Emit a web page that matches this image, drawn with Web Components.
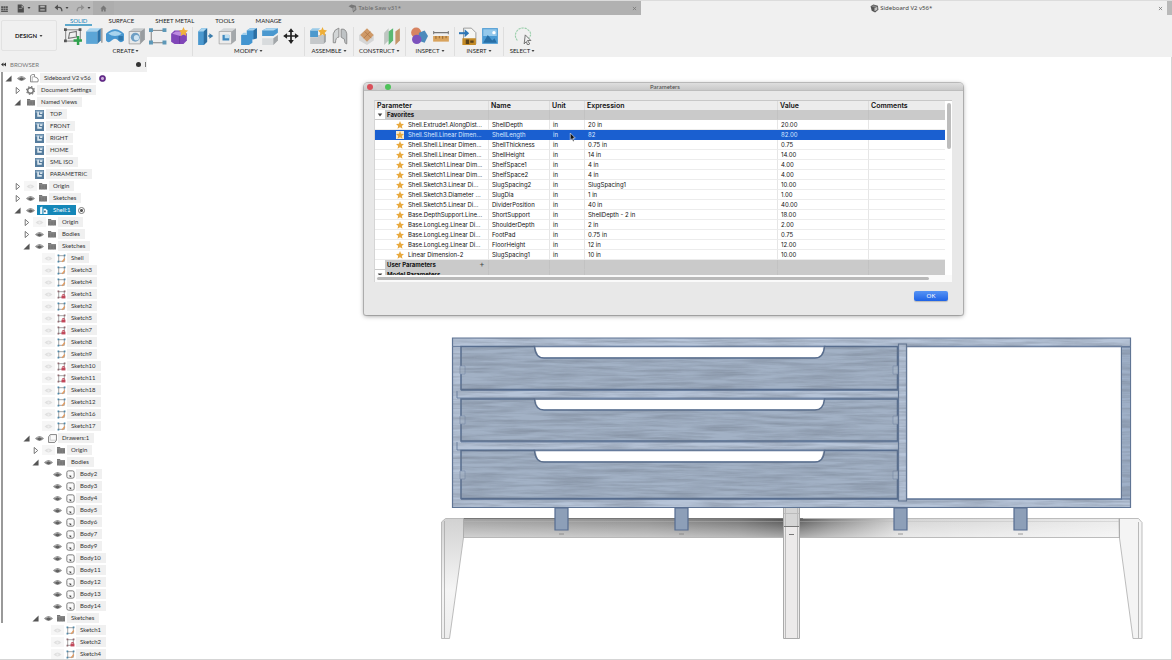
<!DOCTYPE html>
<html lang="en">
<head>
<meta charset="utf-8">
<title>Sideboard V2 v56</title>
<style>
html, body { margin: 0; height: 100%; }
body { font: 6px/8px Lato, "Noto Sans", sans-serif; color: #333; background: #fff; overflow: hidden; }
</style>
</head>
<body>
<cad-app></cad-app>
<script>
const ICONS = {
  grid: '<path fill="#555" d="M2 4h3.500v3h-3.500zM6.200 4h3.500v3h-3.500zM10.400 4h3.500v3h-3.500zM2 8h3.500v3h-3.500zM6.200 8h3.500v3h-3.500zM10.400 8h3.500v3h-3.500zM2 12h12v2h-12z"/>',
  file: '<path fill="#4d4d4d" d="M3 1h7l4 4v10H3z"/><path fill="#b9b9b9" d="M10 2v4h4zM5 8h6v1H5z"/>',
  save: '<path fill="#555" d="M1 2h14v12H1z"/><path fill="#b5b5b5" d="M4 3h8v3H4zM4 9h8v1H4zM4 11h8v1H4z"/>',
  undo: '<path fill="none" stroke="#505050" stroke-width="2.400" d="M4 6h5q5 0 5 7"/><path fill="#505050" d="M1 6l6-5v10z"/>',
  redo: '<path fill="none" stroke="#909090" stroke-width="2.400" d="M12 6H7q-5 0-5 7"/><path fill="#909090" d="M15 6L9 1v10z"/>',
  home: '<path fill="#777" d="M8 1L1 8h2v7h4v-4h2v4h4V8h2z"/>',
  cube: '<path fill="#555" d="M1 4l5-3 8 2 1 7-6 5-6-3z"/><path fill="#c4c4c4" d="M8 7l5-2v5l-5 3z"/><path fill="#888" d="M2 4l4-2 7 2-5 2z"/>',
  cubeDim: '<path fill="#777" d="M1 4l5-3 8 2 1 7-6 5-1-7z"/><path fill="#999" d="M8 7l5-2v5l-5 3z"/>',
  caret: '<path fill="#444" d="M2 4h12l-6 8z"/>',
  close: '<path stroke="#777" stroke-width="2.500" d="M3 3l10 10M13 3L3 13"/>',
  eye: '<path fill="#8a8a8a" d="M0 8q8-8 16 0q-8 8-16 0z"/><circle cx="8" cy="8" r="3.500" fill="#606060"/><path stroke="#ddd" d="M3 7q5-3 10 0" fill="none"/>',
  eyeOff: '<path fill="#e0e0e0" d="M1 8q7-7 14 0q-7 7-14 0z"/><circle cx="8" cy="8" r="2" fill="#efefef"/>',
  folder: '<path fill="#777" d="M0 2h6l1 2h9v11H0z"/><path stroke="#a4a4a4" d="M0 5.500h16"/><path stroke="#8e8e8e" d="M5.500 6v9M10.500 6v9"/>',
  gear: '<circle cx="8" cy="8" r="5" fill="none" stroke="#777" stroke-width="2.500"/><circle cx="8" cy="8" r="7" fill="none" stroke="#777" stroke-width="2" stroke-dasharray="2.700 2.800"/>',
  view: '<path fill="#557c9d" d="M0 0h16v16H0z"/><path fill="#88a7c0" d="M1 1h14v4H1z"/><path fill="#dce8f0" d="M4 3h3v6h5v3H4zM9 4h4v3H9z"/>',
  doc: '<path fill="#fff" stroke="#666" stroke-width="1.300" d="M1 14V3l3-2h4v4l5 2q3 3 1 7z"/><path stroke="#888" fill="none" d="M8 5H4v9"/>',
  comp: '<path fill="#eef6fa" d="M2 2l4-1v13H2z"/><path fill="#fff" d="M8 5h4l3 3v6H8z"/><path fill="#37627c" d="M9 8h3v3H9z"/>',
  sketch: '<path fill="#fff" stroke="#777" stroke-width="1.200" d="M3 3h10v10H3z"/><path fill="#4d87a8" d="M1 1h3v3H1zM12 1h3v3h-3zM1 12h3v3H1z"/><path stroke="#e39a5d" stroke-width="2.200" d="M9 14l5-6"/>',
  sketchLock: '<path fill="#fff" stroke="#777" stroke-width="1.200" d="M3 3h10v10H3z"/><path fill="#8f6a70" d="M1 1h3v3H1zM12 1h3v3h-3zM1 12h3v3H1z"/><path fill="#c2485a" d="M8 10h7v5H8z"/><path stroke="#c2485a" stroke-width="1.500" fill="none" d="M10 10V8h3v2"/>',
  body: '<rect x="1.500" y="1.500" width="13" height="13" rx="3" fill="#fafafa" stroke="#666" stroke-width="1.500"/><path stroke="#999" d="M5 10h4v3"/>',
  part: '<path fill="#fafafa" stroke="#666" stroke-width="1.400" d="M1 5l3-4h11v10l-3 4H1z"/><path stroke="#aaa" fill="none" d="M4 1v10h11"/>',
  shut: '<path fill="none" stroke="#666" stroke-width="2" d="M5 1v14l8-7z"/>',
  open: '<path fill="#555" d="M15 1v14H1z"/>',
  star: '<path fill="#e8a93f" d="M8 0l2.300 5.300 5.700.6-4.300 3.900 1.300 5.800-5-3-5 3 1.300-5.800L0 5.900l5.700-.6z"/>',
  newSketch: '<path fill="none" stroke="#777" stroke-width=".8" d="M1.500 2.500h13v10h-13z"/><path fill="none" stroke="#777" d="M4 10l1-5 6-1v5z"/><path fill="#555" d="M0 1h2.500v2.500H0zM13 1h2.500v2.500H13zM0 11h2.500v2.500H0z"/><path stroke="#2fa34d" stroke-width="2.200" d="M12.500 8v8M8.500 12h8"/>',
  extrude: '<path fill="#a7d4ef" d="M1 4l3-3h10l-3 3z"/><path fill="#5ba5d6" d="M1 4h10v11H1z"/><path fill="#2c73a8" d="M11 4l3-3v11l-3 3z"/><path stroke="#666" stroke-width=".8" d="M15 1v13"/>',
  revolve: '<path fill="#4897d0" d="M0 6q8-8 16 0v6q-3 3-5 0-3-3-6 0-3 3-5 0z"/><path fill="#a8d4ee" d="M2 6q6-5 12 0-6 4-12 0z"/><path fill="#2f76aa" d="M11 8h4v4h-4z"/>',
  hole: '<path fill="#c9ccce" d="M1 4l4-3h10l-4 3z"/><path fill="#e7e9ea" stroke="#999" stroke-width=".7" d="M1 4h10v11H1z"/><path fill="#999da0" d="M11 4l4-3v10l-4 4z"/><circle cx="6.500" cy="9" r="4" fill="#6f9fc4"/><circle cx="7.500" cy="9.500" r="2.300" fill="#cfe4f2"/>',
  pattern: '<path stroke="#777" stroke-width=".8" fill="none" d="M2 3h11M2 3v11h11"/><path fill="#5d98b8" d="M0 1h3.500v3.500H0zM12 1h3.500v3.500h-3.500zM0 12h3.500v3.500H0zM12 12h3.500v3.500h-3.500z"/>',
  form: '<path fill="#8046b8" d="M1 6l3-3h8l3 3v6l-3 3H4l-3-2z"/><path fill="#bd8ae0" d="M2 6l3-2h6l3 2-5 2z"/><path stroke="#5e2d91" stroke-width=".5" fill="none" d="M8.500 8v7"/><path fill="#f0b13c" d="M12 0l1.200 2.600L16 3l-2 2 .5 3L12 6.500 9.500 8l.5-3-2-2 2.800-.4z"/>',
  press: '<path fill="#4a98cf" d="M1 4l3-3h5v12l-3 3H1z"/><path fill="#a7d4ef" d="M1 4l3-3h5L6 4z"/><path fill="#2b6d9f" d="M6 4l3-3v12l-3 3z"/><path stroke="#3b7cab" stroke-width="1.500" d="M10 8h3"/><path fill="#3b7cab" d="M11 5.500l3.500 2.500-3.500 2.500z"/>',
  fillet: '<path fill="#d5d8da" d="M1 4l4-3h11l-4 3z"/><path fill="#ececec" stroke="#999" stroke-width=".6" d="M1 4h11v11H1z"/><path fill="#a4a8ab" d="M12 4l4-3v11l-4 3z"/><path fill="#3f89bf" d="M4 7h6v5H4z"/><path fill="#bddff2" d="M6 7h4v3H6z"/>',
  combine: '<path fill="#4294d0" d="M1 7h5V3l3-2h6v9l-4 1v3l-3 2H1z"/><path fill="#a2d0ec" d="M6 3l3-2h6l-3 2zM1 7l2-2h3v2z"/><path fill="#2c6fa3" d="M12 3l3-2v9l-3 1z"/>',
  split: '<path fill="#4a98cf" d="M1 3l4-2h10v4l-4 3H1z"/><path fill="#b0d8f0" d="M1 3l4-2h10l-4 2z"/><path fill="#d8dbdd" d="M1 10h10l4-3v5l-4 4H1z"/><path fill="#a2a6a9" d="M11 10l4-3v5l-4 4z"/>',
  move: '<path stroke="#222" stroke-width="1.500" d="M8 3v10M3 8h10"/><path fill="#222" d="M8 1l2.500 3.500h-5zM8 15l2.500-3.500h-5zM1 8l3.500-2.500v5zM15 8l-3.500-2.500v5z"/>',
  newComp: '<path fill="#4c99cd" d="M1 3h7v6H1z"/><path fill="#c5c8ca" d="M1 9h7v6H1zM8 7h5v8H8z"/><path fill="#9bcbe8" d="M1 3l2-2h7L8 3z"/><path fill="#a0a4a6" d="M13 7l2-1v7l-2 2z"/><path fill="#eeae38" d="M12 0l1 2.500 3 .5-2 2 .5 3L12 6.500 9.500 8l.5-3-2-2 3-.5z"/>',
  joint: '<path fill="#d2d5d6" stroke="#888" stroke-width=".8" d="M2 14V6q1-4 5-5v8q-3 0-3 5z"/><path fill="#bfc3c5" stroke="#888" stroke-width=".8" d="M9 2q4-1 5 4v9q-2 0-2-4l-3-2z"/>',
  plane: '<path fill="#d5d6d6" d="M1 7l7-5 6 5v5l-6 4-7-4z"/><path fill="#cf9a68" d="M2 7l6-6 6 6-6 6z"/><path stroke="#a96e3b" stroke-width=".6" fill="none" d="M6 4l6 6M11 4L5 10"/>',
  mid: '<path fill="#bfc6c2" d="M1 5l4-4v11l-4 4z"/><path fill="#5bb872" d="M5 4l4-3v11l-4 4z"/><path fill="#c4956a" d="M11 4l4-3v11l-4 4z"/>',
  inspect: '<circle cx="5.500" cy="5" r="4.500" fill="#d78361"/><path fill="#4c8abb" d="M8 5l5-2 3 5-3 6-6-2z"/><circle cx="6" cy="11" r="4.200" fill="#7c52bd"/>',
  measure: '<path fill="#d9a35c" d="M1 8h14v5H1z"/><path stroke="#8b5f2b" stroke-width=".8" d="M3.500 8v2.500M6.500 8v2M9.500 8v2.500M12.500 8v2"/><path stroke="#777" stroke-width=".9" d="M1 5h14M1.500 3.500v3M14.500 3.500v3"/>',
  insert: '<path fill="#f6f6f3" stroke="#888" stroke-width=".7" d="M4 1h7l4 4v10H4z"/><path fill="#c38a25" d="M3 10h12v6H3z"/><path fill="#5a431c" d="M6 11h3v4H6zM10 12h3v2h-3z"/><path stroke="#2e76b5" stroke-width="1.800" d="M0 5.500h6"/><path fill="#2e76b5" d="M5 2l4 3.500L5 9z"/>',
  image: '<path fill="#4b9bd4" d="M1 1h14v14H1z"/><path fill="#94c9ec" d="M2 2h12v6H2z"/><circle cx="11.500" cy="5" r="1.500" fill="#fff"/><path fill="#286fa6" d="M2 14l4-7 4 5 2-2 2 4z"/>',
  select: '<path fill="none" stroke="#99ceaa" stroke-width="1" stroke-dasharray="2 .8" d="M3 12Q-1 7 4 2q6-3 10 2 2 3-1 6"/><path fill="#eee" stroke="#666" stroke-width=".8" d="M10 7l5 5h-3l2 3-2 1-1-3-2 2z"/>',
  pointer: '<path fill="#111" stroke="#fff" stroke-width="1" d="M4 0l9 9H9l2 5-2 1-2-5-3 3z"/>'
};

/* Shared base: fills an open shadow root from the class's css() and html(). */
class Piece extends HTMLElement {
  connectedCallback() {
    if (this.shadowRoot) return;
    const t = document.createElement('template');
    t.innerHTML = `<style>*{box-sizing:border-box}button{font:inherit;color:inherit;border:0;padding:0;margin:0;background:none}a{color:inherit;text-decoration:none}${this.css()}</style>${this.html()}`;
    this.attachShadow({ mode: 'open' }).append(t.content.cloneNode(true));
  }
  attr(n, d = '') { return this.getAttribute(n) ?? d; }
}

class CadIcon extends Piece {
  css() { return ':host{display:inline-block;width:9px;height:9px;flex:none}svg{display:block;width:100%;height:100%}'; }
  html() { return `<svg viewBox="0 0 16 16" aria-hidden="true">${ICONS[this.attr('name')]}</svg>`; }
}
customElements.define('cad-icon', CadIcon);

class DocTab extends Piece {
  css() { return `
    :host{display:flex;flex:1;align-items:center;background:#b1b1b1;color:#666;padding:0 4px;min-width:0;font-family:"Noto Sans",sans-serif}
    :host([active]){background:#f0f0f0;color:#444}
    a{flex:1;display:flex;justify-content:center;align-items:center;gap:1px;white-space:nowrap}
    button{display:flex} .x{width:5px;height:5px}`; }
  html() { return `<a href="#"><cad-icon name="${this.attr('icon')}"></cad-icon><slot></slot></a><button aria-label="Close tab"><cad-icon class="x" name="close"></cad-icon></button>`; }
}
customElements.define('doc-tab', DocTab);

class TabBar extends Piece {
  css() { return `
    :host{display:flex;height:15px;border-top:1px solid #dcdcdc;background:#b9b9b9}
    .quick{display:flex;align-items:center;width:93px;flex:none;gap:7px}
    .quick button{display:flex;align-items:center;gap:2px}
    .quick .c{width:4px;height:4px}
    .home{width:21px;background:#adadad;display:flex;align-items:center;justify-content:center}
    .home cad-icon{width:7px;height:7px}
    .end{width:5px;background:#b9b9b9}`; }
  html() {
    const b = (n, l, c) => `<button aria-label="${l}"><cad-icon name="${n}"></cad-icon>${c ? '<cad-icon class="c" name="caret"></cad-icon>' : ''}</button>`;
    return `<div class="quick">${b('grid', 'Data panel')}${b('file', 'File', 1)}${b('save', 'Save')}${b('undo', 'Undo', 1)}${b('redo', 'Redo', 1)}</div>
    <button class="home" aria-label="Home"><cad-icon name="home"></cad-icon></button>
    <doc-tab icon="cubeDim">Table Saw v31*</doc-tab><doc-tab icon="cube" active>Sideboard V2 v56*</doc-tab><div class="end"></div>`; }
}
customElements.define('tab-bar', TabBar);

class ToolGroup extends Piece {
  css() { return `
    :host{display:flex;flex-direction:column;gap:2px;padding:0 4px;border-right:1px solid #dedede}
    :host(:last-of-type){border-right:0}
    .tools{display:flex;justify-content:space-between}
    .tools.one{justify-content:center}
    .tools button{display:flex} .tools cad-icon{width:18px;height:18px}
    .menu{display:flex;justify-content:center;align-items:center;gap:1px;line-height:8px;white-space:nowrap}
    .menu cad-icon{width:4px;height:4px}`; }
  html() {
    const list = this.attr('tools').split(' ');
    return `<div class="tools ${list.length < 2 ? 'one' : ''}">${list.map(n => `<button aria-label="${n}"><cad-icon name="${n}"></cad-icon></button>`).join('')}</div>
    <button class="menu"><slot></slot><cad-icon name="caret"></cad-icon></button>`; }
}
customElements.define('tool-group', ToolGroup);

class ToolRibbon extends Piece {
  css() { return `
    :host{display:flex;height:42px;background:#f0f0f0;padding-left:1px;color:#222}
    .design{width:56px;height:31px;margin-top:5px;border:1px solid #e2e2e2;border-radius:2px;display:flex;align-items:center;justify-content:center;gap:2px;font-weight:700}
    .design cad-icon{width:4px;height:4px}
    nav{display:flex;gap:11px;height:12px}
    nav a{padding:2px 5px 0;line-height:7px;height:11px;border-bottom:2px solid transparent;white-space:nowrap}
    nav a[aria-current]{color:#1684ba;border-color:#5ca7cb}
    .right{flex:1;min-width:0;padding-left:8px}
    .groups{display:flex;margin-left:-5px;height:29px}
    .w133{width:133px}.w112{width:112px}.w49{width:49px}.w52{width:52px}.w37{width:37px}`; }
  html() { return `<button class="design">DESIGN<cad-icon name="caret"></cad-icon></button>
    <div class="right"><nav><a href="#" aria-current="page">SOLID</a><a href="#">SURFACE</a><a href="#">SHEET METAL</a><a href="#">TOOLS</a><a href="#">MANAGE</a></nav>
    <div class="groups">
    <tool-group class="w133" tools="newSketch extrude revolve hole pattern form">CREATE</tool-group>
    <tool-group class="w112" tools="press fillet combine split move">MODIFY</tool-group>
    <tool-group class="w49" tools="newComp joint">ASSEMBLE</tool-group>
    <tool-group class="w52" tools="plane mid">CONSTRUCT</tool-group>
    <tool-group class="w49" tools="inspect measure">INSPECT</tool-group>
    <tool-group class="w49" tools="insert image">INSERT</tool-group>
    <tool-group class="w37" tools="select">SELECT</tool-group>
    </div></div>`; }
}
customElements.define('tool-ribbon', ToolRibbon);

class TreeRow extends Piece {
  css() { return `
    :host{display:flex;height:12px;align-items:center;padding-left:calc(5px + 9px * ${this.attr('level', 0)})}
    button{display:flex;align-items:center;justify-content:center;height:10px;flex:none}
    .x{width:10px;justify-content:flex-start} .x cad-icon{width:7px;height:7px}
    .eye{width:13px} .eye.bg{background:#f6f6f6}
    .kind{width:12px;height:10px;display:flex;align-items:center;justify-content:center;flex:none}
    .kind.wide{width:13px}
    .kind.folder cad-icon{width:8px;height:8px}
    .label{height:10px;line-height:10px;padding:0 5px 0 4px;background:#f0f0f0;white-space:nowrap;color:#333}
    :host([selected]) .kind{background:#1587b8}
    :host([selected]) .label{background:#1587b8;color:#fff}
    input{appearance:none;width:7px;height:7px;margin:0 0 0 2px;border:1px solid #777;border-radius:50%;background:radial-gradient(#555 0 1px,#fff 2px)}
    .badge{width:7px;height:7px;margin-left:3px;border-radius:50%;background:radial-gradient(#c9b0d8 0 1px,#6b2c91 2px);border:1px solid #54207a}`; }
  html() {
    const eye = this.attr('eye'), x = this.attr('x'), k = this.attr('kind');
    return `<button class="x" ${x ? 'aria-label="Toggle"' : 'tabindex="-1" aria-hidden="true"'}>${x ? `<cad-icon name="${x}"></cad-icon>` : ''}</button>
    ${eye ? `<button class="eye ${eye === 'eyeOff' ? 'bg' : ''}" aria-label="Visibility"><cad-icon name="${eye}"></cad-icon></button>` : ''}
    <span class="kind ${k} ${eye ? '' : 'wide'}"><cad-icon name="${k}"></cad-icon></span><span class="label"><slot></slot></span>
    ${this.hasAttribute('selected') ? '<input type="radio" checked aria-label="Activate component">' : ''}${this.hasAttribute('badge') ? '<span class="badge"></span>' : ''}`; }
}
customElements.define('tree-row', TreeRow);

class BrowserPanel extends Piece {
  css() { return `
    :host{display:block;width:147px;flex:none;overflow:hidden}
    header{height:15px;background:#f0f0f0;display:flex;align-items:center;gap:4px;padding:0 1px;color:#777}
    header b{font-weight:400;flex:1}
    .dbl{width:5px;height:5px} .pin{width:5px;height:5px;border-radius:50%;background:#333}
    .grip{width:1px;height:5px;background:#777}
    .tree{background:linear-gradient(#999,#999) 1px 0/2px 551px no-repeat}`; }
  html() {
    const R = (level, x, eye, kind, label, extra = '') => `<tree-row level="${level}" x="${x}" eye="${eye}" kind="${kind}" ${extra}>${label}</tree-row>`;
    const views = ['TOP', 'FRONT', 'RIGHT', 'HOME', 'SML ISO', 'PARAMETRIC'].map(v => R(2, '', '', 'view', v)).join('');
    const sk = (lvl, names, locked) => names.map(n => R(lvl, '', 'eyeOff', locked.includes(n) ? 'sketchLock' : 'sketch', n === 0 ? 'Shell' : 'Sketch' + n)).join('');
    const bodies = [2, 3, 4, 5, 6, 7, 9, 10, 11, 12, 13, 14].map(n => R(4, '', 'eye', 'body', 'Body' + n)).join('');
    return `<header><svg class="dbl" viewBox="0 0 10 10" aria-hidden="true"><path fill="#333" d="M5 1v8L0 5zM10 1v8L5 5z"/></svg><b>BROWSER</b><span class="pin"></span><span class="grip"></span></header>
    <div class="tree">${R(0, 'open', 'eye', 'doc', 'Sideboard V2 v56', 'badge')}${R(1, 'shut', '', 'gear', 'Document Settings')}${R(1, 'open', '', 'folder', 'Named Views')}${views}
    ${R(1, 'shut', 'eyeOff', 'folder', 'Origin')}${R(1, 'shut', 'eye', 'folder', 'Sketches')}${R(1, 'open', 'eye', 'comp', 'Shell:1', 'selected')}
    ${R(2, 'shut', 'eyeOff', 'folder', 'Origin')}${R(2, 'shut', 'eye', 'folder', 'Bodies')}${R(2, 'open', 'eye', 'folder', 'Sketches')}
    ${sk(3, [0, 3, 4, 1, 2, 5, 7, 8, 9, 10, 11, 18, 12, 16, 17], [1, 5, 7, 10, 11])}
    ${R(2, 'open', 'eye', 'part', 'Drawers:1')}${R(3, 'shut', 'eyeOff', 'folder', 'Origin')}${R(3, 'open', 'eye', 'folder', 'Bodies')}${bodies}
    ${R(3, 'open', 'eye', 'folder', 'Sketches')}${sk(4, [1, 2, 4], [2])}</div>`; }
}
customElements.define('browser-panel', BrowserPanel);

class ParamTable extends Piece {
  css() { return `
    :host{display:block;background:#fff;border-top:1px solid #c8c8c8;border-left:1px solid #d5d5d5;font:6px/10px Inter,"Liberation Sans",sans-serif;color:#111}
    .view{display:flex}
    .clip{flex:1;min-width:0;height:174px;overflow:hidden}
    table{width:100%;table-layout:fixed;border-collapse:separate;border-spacing:0}
    th,td{height:10px;padding:0 0 0 3px;text-align:left;white-space:nowrap;overflow:hidden;border-right:1px solid #e6e6e6}
    th:last-child,td:last-child{border-right:0}
    td{border-bottom:1px solid #ececec;line-height:9px}
    thead th{height:9px;line-height:9px;background:#ececec;font-size:7px;font-weight:600;color:#111;border-color:#dcdcdc;padding-left:2px}
    .c1{width:114px}.c2{width:61px}.c3{width:35px}.c5{width:91px}.c6{width:76px}
    .p{display:flex;align-items:center;padding-left:18px;gap:4px}
    .p cad-icon{width:8px;height:8px}
    .sec td{background:#cacaca;border-right-color:#c2c2c2;border-bottom-color:#cacaca;font-weight:700;line-height:9px}
    .sec td:first-child{padding-left:0}
    .h{display:flex;align-items:center;justify-content:space-between;padding-right:1px}
    .h .tw{width:10px;height:9px;background:#fff;display:flex;justify-content:center;align-items:center;margin-right:2px;flex:none}
    .tw cad-icon{width:6px;height:6px}
    .h span{flex:1} .add{font-size:8px;font-weight:400;color:#444;width:10px;height:9px;line-height:9px}
    .on td{background:#1a5fd0;color:#dbe8ff;border-color:#1a5fd0}
    .on cad-icon{background:#f6ead0}
    .v{width:7px;padding-top:2px} .v i{display:block;width:4px;height:46px;margin:0 auto;border-radius:2px;background:#bcbcbc}
    .hs{height:7px;padding:2px 23px 0 2px;background:#fafafa} .hs i{display:block;height:3px;border-radius:2px;background:#b9b9b9}`; }
  html() {
    const rows = [['Shell.Extrude1.AlongDist...', 'ShellDepth', '20 in', '20.00'], ['Shell.Shell.Linear Dimen...', 'ShellLength', '82', '82.00'],
      ['Shell.Shell.Linear Dimen...', 'ShellThickness', '0.75 in', '0.75'], ['Shell.Shell.Linear Dimen...', 'ShellHeight', '14 in', '14.00'],
      ['Shell.Sketch1.Linear Dim...', 'ShelfSpace1', '4 in', '4.00'], ['Shell.Sketch1.Linear Dim...', 'ShelfSpace2', '4 in', '4.00'],
      ['Shell.Sketch3.Linear Di...', 'SlugSpacing2', 'SlugSpacing1', '10.00'], ['Shell.Sketch3.Diameter ...', 'SlugDia', '1 in', '1.00'],
      ['Shell.Sketch5.Linear Di...', 'DividerPosition', '40 in', '40.00'], ['Base.DepthSupport.Line...', 'ShortSupport', 'ShellDepth - 2 in', '18.00'],
      ['Base.LongLeg.Linear Di...', 'ShoulderDepth', '2 in', '2.00'], ['Base.LongLeg.Linear Di...', 'FootPad', '0.75 in', '0.75'],
      ['Base.LongLeg.Linear Di...', 'FloorHeight', '12 in', '12.00'], ['Linear Dimension-2', 'SlugSpacing1', '10 in', '10.00']];
    const sec = (t, x, add) => `<tr class="sec"><td><div class="h"><button class="tw" aria-label="Toggle ${t}">${x ? '<cad-icon name="caret"></cad-icon>' : ''}</button><span>${t}</span>${add ? '<button class="add" aria-label="Add parameter">+</button>' : ''}</div></td><td></td><td></td><td></td><td></td><td></td></tr>`;
    return `<div class="view"><div class="clip"><table><colgroup><col class="c1"><col class="c2"><col class="c3"><col><col class="c5"><col class="c6"></colgroup>
    <thead><tr><th>Parameter</th><th>Name</th><th>Unit</th><th>Expression</th><th>Value</th><th>Comments</th></tr></thead><tbody>${sec('Favorites', 1)}
    ${rows.map((r, i) => `<tr class="${i === 1 ? 'on' : ''}"><td><div class="p"><cad-icon name="star"></cad-icon>${r[0]}</div></td><td>${r[1]}</td><td>in</td><td>${r[2]}</td><td>${r[3]}</td><td></td></tr>`).join('')}
    ${sec('User Parameters', 0, 1)}${sec('Model Parameters', 1)}</tbody></table></div><div class="v"><i></i></div></div><div class="hs"><i></i></div>`; }
}
customElements.define('param-table', ParamTable);

class ParamDialog extends Piece {
  css() { return `
    :host{display:block;background:#e8e8e8;border-radius:4px 4px 2px 2px;box-shadow:0 1px 5px #0006,0 0 0 1px #cfcfcf;padding-bottom:14px}
    header{height:8px;border-radius:4px 4px 0 0;background:linear-gradient(#dedede,#c9c9c9);display:grid;grid-template-columns:1fr auto 1fr;align-items:center;padding-left:3px;color:#444;border-bottom:1px solid #bdbdbd}
    h1{margin:0;font:inherit}
    .lights{display:flex;gap:3px} .lights button{width:6px;height:6px;border-radius:50%;background:#d0d0d0}
    .lights .r{background:#d9505a} .lights .g{background:#4fc25a}
    param-table{margin:9px 11px 9px 10px}
    footer{display:flex;justify-content:flex-end;padding-right:15px}
    .ok{width:34px;height:10px;border-radius:2px;background:linear-gradient(#5794f5,#1f63e6);color:#fff;box-shadow:0 1px 1px #0003}`; }
  html() { return `<header><div class="lights"><button class="r" aria-label="Close"></button><button aria-label="Minimise"></button><button class="g" aria-label="Zoom"></button></div><h1>Parameters</h1></header>
    <param-table></param-table><footer><button class="ok">OK</button></footer>`; }
}
customElements.define('param-dialog', ParamDialog);

class ModelView extends Piece {
  css() { return ':host{display:block}svg{display:block;width:100%;height:100%}'; }
  html() {
    const drawer = (t, h, b, n) => `<path class="d" d="M461 ${t}H534.500Q535.500 ${h} 544 ${h}H815Q823.500 ${h} 824.500 ${t}H897.500V${b}H461z"/>
      <path class="n" d="M460 ${n}h5v8h-5zM893 ${n}h5v8h-5z"/>`;
    const tab = x => `<path class="t" d="M${x} 508h13v22h-13z"/><path stroke="#777" d="M${x + 4} 534h5" opacity=".7"/>`;
    return `<svg viewBox="147 57 1024 602" role="img" aria-label="Sideboard front view">
    <defs>
      <linearGradient id="beam"><stop offset="0" stop-color="#a2a2a2"/><stop offset=".28" stop-color="#8e8e8e"/><stop offset=".42" stop-color="#747474"/><stop offset=".5" stop-color="#505050"/><stop offset=".56" stop-color="#858585"/><stop offset=".67" stop-color="#d4d4d4"/><stop offset="1" stop-color="#ececec"/></linearGradient>
      <linearGradient id="fade" x2="0" y2="1"><stop offset="0" stop-color="#fff" stop-opacity="0"/><stop offset="1" stop-color="#fff" stop-opacity=".5"/></linearGradient>
      <linearGradient id="leg" x2="0" y2="1"><stop offset="0" stop-color="#d2d2d2"/><stop offset=".6" stop-color="#f5f5f5"/><stop offset="1" stop-color="#ededed"/></linearGradient>
      <filter id="grain" x="0" y="0" width="1" height="1" color-interpolation-filters="sRGB"><feTurbulence type="fractalNoise" baseFrequency=".02 .3" numOctaves="4" seed="4"/><feColorMatrix values="0 0 0 0 .42  0 0 0 0 .46  0 0 0 0 .52  0 .8 0 0 -.25"/><feComposite in2="SourceGraphic" operator="in"/></filter>
      <g id="fronts">${drawer(346.5, 358, 389.5, 366)}${drawer(399, 410, 441, 416)}${drawer(450.500, 462, 498.500, 471)}</g>
    </defs>
    <style>.d{fill:#a2b1c5;stroke:#566c8e;stroke-width:1.500}.n{fill:#a9b8cb;stroke:#7f91ac;stroke-width:.700}.t{fill:#8d9fb8;stroke:#566d90;stroke-width:1.200}.f{fill:#b6c4d8;stroke:#5f7596;stroke-width:1.200}.w{fill:#fff;stroke:#5f7596}.l{stroke:#b5b5b5;stroke-width:.900}</style>
    <path class="l" fill="url(#beam)" d="M463 518.500h656v19H463z"/><path fill="url(#fade)" d="M463 519h656v18H463z"/><path stroke="#777" d="M463 518.500h340"/><path stroke="#bbb" d="M463 521.500h656" opacity=".4"/>
    <path class="l" fill="url(#leg)" d="M441.500 522l4-3.500h18v19L449.500 638.500h-8z"/><path stroke="#aaa" fill="none" stroke-width=".800" d="M444.500 521v117M463.500 518v20"/>
    <path class="l" fill="#f4f4f4" d="M1119.500 518.500h19l3.500 4v116h-9L1119.500 538z"/><path stroke="#aaa" fill="none" stroke-width=".800" d="M1138.500 522v116M1119.500 518v20"/>
    <path fill="#eceaea" stroke="#aaa" d="M783.500 507.500h16v131h-16z"/><path fill="#d5d5d5" d="M784 508h15v18h-15z"/><path stroke="#bbb" d="M785.500 508v130M797.500 508v130M784 513.500h15"/><path stroke="#777" d="M784 526.500h15M789 534.500h5"/>
    <path class="f" d="M452.500 338h678v169.500h-678z"/>
    <path class="w" d="M534 346.500h291v12H534zM534 399h291v11.500H534zM534 450.500h291v12H534zM906.500 346.500h215v152.500h-215z" stroke-width="1.300"/>
    <path fill="none" stroke="#6f84a5" d="M452.500 346.500h678M461 390.500h437M461 398h437M461 442h437M461 450h437M461 499.500h661M457 391v7h4M457 442v8h4"/>
    <use href="#fronts"/>
    <path class="f" stroke-width=".800" d="M898.500 344h8v157h-8z"/>
    <path fill="#9fb0c8" stroke="#5f7596" d="M1121.500 347h9v152h-9z"/>
    <path fill="#000" filter="url(#grain)" fill-rule="evenodd" d="M452.500 338h678v169.500h-678zM536 347H823Q822 357.500 815 357.500H544Q537 357.500 536 347zM536 400H823Q822 409.500 815 409.500H544Q537 409.500 536 400zM536 451H823Q822 461.500 815 461.500H544Q537 461.500 536 451zM907 347h214v152h-214z"/>
    ${tab(555)}${tab(675)}${tab(894)}${tab(1014)}
    </svg>`; }
}
customElements.define('model-view', ModelView);

class CadApp extends Piece {
  css() { return `
    :host{display:flex;flex-direction:column;height:100vh;border-bottom:1px solid #d5d5d5;box-sizing:border-box}
    main{display:flex;flex:1;min-height:0}
    .stage{flex:1;min-width:0;position:relative;border-right:1px solid #d5d5d5}
    model-view{height:100%}
    param-dialog{position:absolute;top:26px;left:217px;right:208px}
    .cursor{position:absolute;top:76px;left:421px;width:9px;height:9px}`; }
  html() { return `<tab-bar></tab-bar><tool-ribbon></tool-ribbon><main><browser-panel></browser-panel><div class="stage"><model-view></model-view><param-dialog></param-dialog><cad-icon class="cursor" name="pointer"></cad-icon></div></main>`; }
}
customElements.define('cad-app', CadApp);
</script>
</body>
</html>
